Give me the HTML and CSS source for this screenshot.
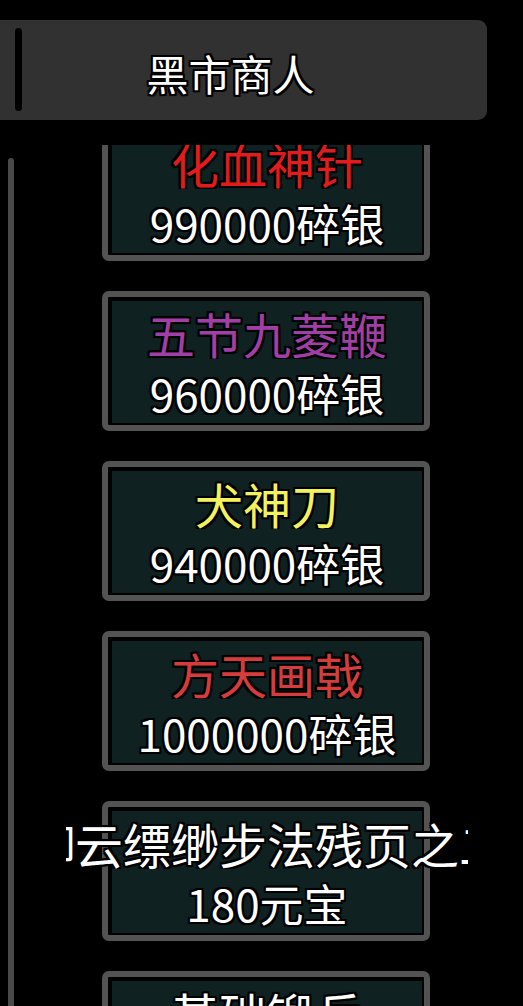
FILE: index.html
```html
<!DOCTYPE html>
<html lang="zh-CN">
<head>
<meta charset="utf-8">
<title>黑市商人</title>
<link rel="stylesheet" href="styles.css">
</head>
<body>
<div class="page">
  <header class="header">
    <div class="header-bar"></div>
    <div class="title outlined">黑市商人</div>
  </header>
  <main class="main">
    <div class="scrollbar"></div>
    <div class="viewport">
      <div class="list">
        <div class="card"><div class="card-inner">
          <div class="name"><span class="outlined c-red">化血神针</span></div>
          <div class="price outlined">990000碎银</div>
        </div></div>
        <div class="card"><div class="card-inner">
          <div class="name"><span class="outlined c-purple">五节九菱鞭</span></div>
          <div class="price outlined">960000碎银</div>
        </div></div>
        <div class="card"><div class="card-inner">
          <div class="name"><span class="outlined c-yellow">犬神刀</span></div>
          <div class="price outlined">940000碎银</div>
        </div></div>
        <div class="card"><div class="card-inner">
          <div class="name"><span class="outlined c-rose">方天画戟</span></div>
          <div class="price outlined">1000000碎银</div>
        </div></div>
        <div class="card"><div class="card-inner">
          <div class="name"><span class="outlined c-white">御云缥缈步法残页之二</span></div>
          <div class="price outlined">180元宝</div>
        </div></div>
        <div class="card"><div class="card-inner">
          <div class="name"><span class="outlined c-white">基础锻兵</span></div>
          <div class="price outlined">50元宝</div>
        </div></div>
      </div>
    </div>
  </main>
</div>
</body>
</html>
```
FILE: styles.css
```css
html, body {
  margin: 0;
  padding: 0;
  background: #000;
}

body {
  font-family: "Noto Sans CJK SC", "Noto Sans", sans-serif;
  color: #fff;
  overflow: hidden;
}

.page {
  width: 523px;
  height: 1006px;
  overflow: hidden;
  background: #000;
}

.outlined {
  text-shadow:
    -2px -2px 0 #000, 2px -2px 0 #000, -2px 2px 0 #000, 2px 2px 0 #000,
    0 -2px 0 #000, 0 2px 0 #000, -2px 0 0 #000, 2px 0 0 #000,
    0 0 3px #000;
}

.header {
  margin-top: 20px;
  margin-left: -26px;
  width: 513px;
  height: 100px;
  box-sizing: border-box;
  padding: 0 48px 0 41px;
  background: #313131;
  border-radius: 9px;
  display: flex;
  align-items: center;
}

.header-bar {
  width: 7px;
  height: 83px;
  margin-top: -1px;
  background: #000;
  border-radius: 4px;
}

.title {
  flex: 1;
  text-align: center;
  font-size: 42px;
  line-height: 56px;
  margin-top: 6px;
  color: #fff;
}

.main {
  margin-top: 25px;
  height: 861px;
  display: flex;
}

.scrollbar {
  margin-left: 8px;
  margin-top: 13px;
  width: 6px;
  flex: none;
  background: #4a4a4a;
  border-radius: 3px 3px 0 0;
}

.viewport {
  flex: 1;
  overflow: hidden;
}

.list {
  margin-top: -24px;
  margin-left: 88px;
  display: flex;
  flex-direction: column;
  gap: 30px;
}

.card {
  width: 328px;
  height: 140px;
  box-sizing: border-box;
  border: 6px solid #535353;
  border-radius: 7px;
  padding: 4px 2px 2px 4px;
  background: #000;
}

.card-inner {
  height: 100%;
  background: #0f2121;
  display: flex;
  flex-direction: column;
  align-items: center;
}

.name {
  width: 402px;
  flex: none;
  margin-top: 6px;
  display: flex;
  justify-content: center;
  overflow: hidden;
  white-space: nowrap;
  font-size: 48px;
  line-height: 52px;
}

.name span {
  flex: none;
}

.price {
  margin-top: 9px;
  font-size: 44px;
  line-height: 50px;
  white-space: nowrap;
  color: #fff;
}

.c-red { color: #e21c1c; }
.c-purple { color: #a23fa6; }
.c-yellow { color: #f2f25e; }
.c-rose { color: #d63c3c; }
.c-white { color: #fff; }
```
